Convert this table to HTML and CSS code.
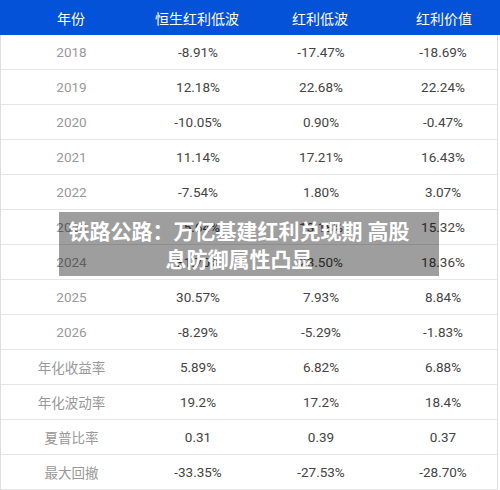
FILE: index.html
```html
<!DOCTYPE html>
<html lang="zh-CN">
<head>
  <meta charset="UTF-8">
  <meta name="viewport" content="width=device-width, initial-scale=1">
  <title>红利指数对比</title>
  <link rel="stylesheet" href="styles.css">
</head>
<body>

  <!-- 表格 -->
  <div class="table">
    <div class="row head">
      <div class="cell">年份</div>
      <div class="cell">恒生红利低波</div>
      <div class="cell">红利低波</div>
      <div class="cell">红利价值</div>
    </div>

    <div class="body">
      <div class="row"><div class="cell label">2018</div><div class="cell">-8.91%</div><div class="cell">-17.47%</div><div class="cell">-18.69%</div></div>
      <div class="row"><div class="cell label">2019</div><div class="cell">12.18%</div><div class="cell">22.68%</div><div class="cell">22.24%</div></div>
      <div class="row"><div class="cell label">2020</div><div class="cell">-10.05%</div><div class="cell">0.90%</div><div class="cell">-0.47%</div></div>
      <div class="row"><div class="cell label">2021</div><div class="cell">11.14%</div><div class="cell">17.21%</div><div class="cell">16.43%</div></div>
      <div class="row"><div class="cell label">2022</div><div class="cell">-7.54%</div><div class="cell">1.80%</div><div class="cell">3.07%</div></div>
      <div class="row"><div class="cell label">2023</div><div class="cell">15.64%</div><div class="cell">13.18%</div><div class="cell">15.32%</div></div>
      <div class="row"><div class="cell label">2024</div><div class="cell">31.70%</div><div class="cell">23.50%</div><div class="cell">18.36%</div></div>
      <div class="row"><div class="cell label">2025</div><div class="cell">30.57%</div><div class="cell">7.93%</div><div class="cell">8.84%</div></div>
      <div class="row"><div class="cell label">2026</div><div class="cell">-8.29%</div><div class="cell">-5.29%</div><div class="cell">-1.83%</div></div>
      <div class="row"><div class="cell label">年化收益率</div><div class="cell">5.89%</div><div class="cell">6.82%</div><div class="cell">6.88%</div></div>
      <div class="row"><div class="cell label">年化波动率</div><div class="cell">19.2%</div><div class="cell">17.2%</div><div class="cell">18.4%</div></div>
      <div class="row"><div class="cell label">夏普比率</div><div class="cell">0.31</div><div class="cell">0.39</div><div class="cell">0.37</div></div>
      <div class="row"><div class="cell label">最大回撤</div><div class="cell">-33.35%</div><div class="cell">-27.53%</div><div class="cell">-28.70%</div></div>
    </div>
  </div>

  <!-- 标题浮层 -->
  <div class="caption">铁路公路：万亿基建红利兑现期 高股息防御属性凸显</div>

</body>
</html>
```

FILE: styles.css
```css
/* 基本设置 */
body {
  margin: 0;
  font-family: Roboto, "Noto Sans CJK SC", sans-serif;
  background-color: #fff;
  position: relative;
  width: 500px;
  height: 490px;
  overflow: hidden;
}

/* 表格 */
.table {
  width: 500px;
}

.row {
  display: grid;
  grid-template-columns: 142px 110px 136px 1fr;
  height: 34px;
  border-bottom: 1px solid #e6e6e6;
  align-items: center;
  text-align: center;
  font-size: 13.5px;
  color: #444;
}

.head {
  height: 35px;
  border-bottom: none;
  background-color: #0452d8;
  color: #fff;
  font-size: 14px;
}

.body {
  width: 496px;
  border-left: 1px solid #dedede;
  border-right: 1px solid #dedede;
}

.body .row .cell:first-child {
  margin-left: -1px;
}

.label {
  color: #999;
  font-size: 13.5px;
}

/* 浮层标题 */
.caption {
  position: absolute;
  left: 59px;
  top: 212px;
  width: 350px;
  padding: 4px 25px 4px 5px;
  background-color: rgba(0, 0, 0, 0.38);
  color: #fff;
  font-family: "Noto Sans CJK SC", sans-serif;
  font-weight: bold;
  font-size: 21px;
  line-height: 28px;
  text-align: center;
}
```
